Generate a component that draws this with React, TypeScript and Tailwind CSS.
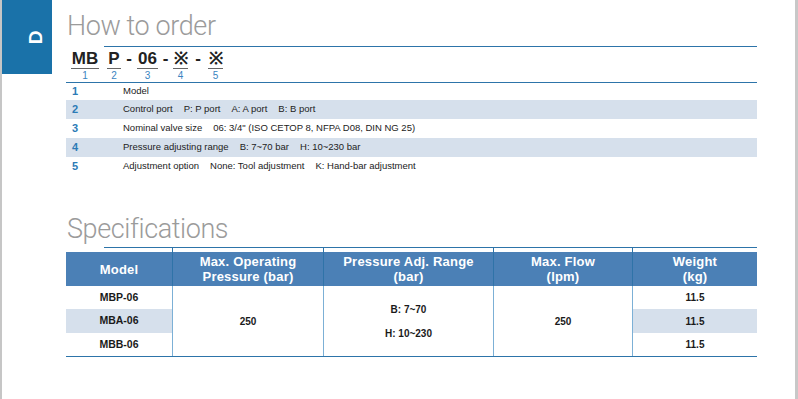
const steps = [
  { no: "1", parts: ["Model"] },
  { no: "2", parts: ["Control port", "P: P port", "A: A port", "B: B port"] },
  { no: "3", parts: ["Nominal valve size", '06: 3/4" (ISO CETOP 8, NFPA D08, DIN NG 25)'] },
  { no: "4", parts: ["Pressure adjusting range", "B: 7~70 bar", "H: 10~230 bar"] },
  { no: "5", parts: ["Adjustment option", "None: Tool adjustment", "K: Hand-bar adjustment"] },
];

const codeParts = [
  { text: "MB", num: "1", w: "w-[28px]", after: "w-[8px]", dash: false },
  { text: "P", num: "2", w: "w-[14px]", after: "w-[16px]", dash: true },
  { text: "06", num: "3", w: "w-[21px]", after: "w-[15px]", dash: true },
  { text: "※", num: "4", w: "w-[15px]", after: "w-[20px]", dash: true },
  { text: "※", num: "5", w: "w-[15px]", after: "", dash: false },
];

function Title({ children }: { children: string }) {
  return (
    <h1 className="h-[32px] pl-[1px] text-[27px] leading-[32px] font-light tracking-[-0.4px] text-[#9b9b9b] font-['Roboto',sans-serif]">
      {children}
    </h1>
  );
}

export default function App() {
  return (
    <div className="flex h-[399px] w-[798px] bg-white font-['Liberation_Sans',Arial,sans-serif] overflow-hidden">
      <div className="w-[2px] bg-[#c6c6c6]" />
      <div className="w-[50px]">
        <div className="flex h-[74px] items-center justify-center bg-[#1a72a9] pl-[17px]">
          <span className="-rotate-90 text-[19px] font-bold leading-none text-white">D</span>
        </div>
      </div>
      <div className="w-[14px]" />

      <main className="w-[691px] pt-[10px]">
        <Title>How to order</Title>
        <div className="ml-[38px] mt-[4px] h-px bg-[#2d74a9]" />

        {/* model code */}
        <div className="ml-[5px] mt-[2px] flex">
          {codeParts.map((p, i) => (
            <div key={i} className="flex">
              <div className={`flex flex-col items-center ${p.w}`}>
                <div className="flex h-[20px] w-full justify-center border-b border-[#666] text-[17px] font-bold leading-[20px] text-[#222]">
                  {p.text}
                </div>
                <div className="h-[13px] pt-[1px] text-[10px] leading-[12px] text-[#3a84bf]">{p.num}</div>
              </div>
              {p.after && (
                <div className={`flex h-[20px] justify-center text-[17px] font-bold leading-[20px] text-[#222] ${p.after}`}>
                  {p.dash ? "-" : ""}
                </div>
              )}
            </div>
          ))}
        </div>

        <div className="h-px bg-[#2d74a9]" />
        <div className="flex flex-col">
          {steps.map((s, i) => (
            <div
              key={s.no}
              className={`flex items-center ${i === 0 ? "h-[17px]" : "h-[19px]"} ${i % 2 === 1 ? "bg-[#d6e0ec]" : ""}`}
            >
              <span className="w-[57px] pl-[6px] text-[11px] font-bold text-[#2c7bb6]">{s.no}</span>
              <div className="flex gap-[11px] text-[9.5px] text-[#222]">
                {s.parts.map((t) => (
                  <span key={t}>{t}</span>
                ))}
              </div>
            </div>
          ))}
        </div>

        <div className="mt-[37px]">
          <Title>Specifications</Title>
        </div>
        <div className="ml-[38px] mt-[2px] h-px bg-[#2d74a9]" />

        {/* spec table */}
        <div className="grid grid-cols-[106px_151px_170px_139px_125px] text-[#1a1a1a]">
          {[
            ["Model"],
            ["Max. Operating", "Pressure (bar)"],
            ["Pressure Adj. Range", "(bar)"],
            ["Max. Flow", "(lpm)"],
            ["Weight", "(kg)"],
          ].map((h, i) => (
            <div key={i} className={`flex flex-col ${i > 0 ? "border-l border-[#2f73a8]" : ""}`}>
              <div className="h-[4px]" />
              <div className="flex h-[34px] flex-col items-center justify-center bg-[#4b80b6] text-[13px] font-bold leading-[15px] tracking-[0.2px] text-white">
                {h.map((l) => (
                  <span key={l}>{l}</span>
                ))}
              </div>
            </div>
          ))}

          <div className="flex flex-col text-[10.5px] font-bold">
            <div className="flex h-[23px] items-center justify-center">MBP-06</div>
            <div className="flex h-[24px] items-center justify-center bg-[#d6e0ec]">MBA-06</div>
            <div className="flex h-[23px] items-center justify-center">MBB-06</div>
          </div>
          <div className="flex items-center justify-center border-l border-[#7cb0d6] text-[10px] font-bold">250</div>
          <div className="flex flex-col items-center justify-center gap-[11px] border-l border-[#7cb0d6] text-[10px] font-bold leading-[13px]">
            <span>B: 7~70</span>
            <span>H: 10~230</span>
          </div>
          <div className="flex items-center justify-center border-l border-[#7cb0d6] text-[10px] font-bold">250</div>
          <div className="flex flex-col border-l border-[#7cb0d6] text-[10px] font-bold">
            <div className="flex h-[23px] items-center justify-center">11.5</div>
            <div className="flex h-[24px] items-center justify-center bg-[#d6e0ec]">11.5</div>
            <div className="flex h-[23px] items-center justify-center">11.5</div>
          </div>
        </div>
        <div className="h-px bg-[#2d74a9]" />
      </main>

      <div className="flex-1" />
      <div className="w-[3px] bg-[#c8c8c8]" />
    </div>
  );
}
